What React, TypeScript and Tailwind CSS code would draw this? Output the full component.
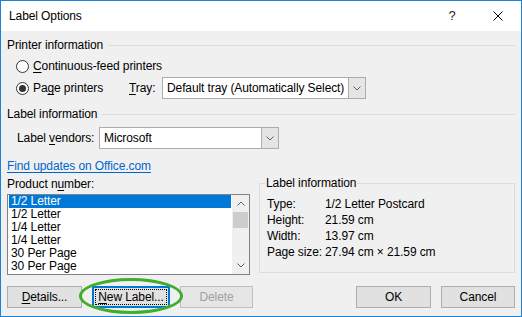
import React from "react";

function Mn({ children }: { children: React.ReactNode }) {
  return <span className="underline underline-offset-[2px] decoration-[1px]">{children}</span>;
}

function Chevron({ up = false }: { up?: boolean }) {
  return (
    <svg width="8" height="5" viewBox="0 0 8 5" className="block">
      <path
        d={up ? "M0.5 4.5 L4 1 L7.5 4.5" : "M0.5 0.5 L4 4 L7.5 0.5"}
        fill="none"
        stroke="#606060"
        strokeWidth="1"
      />
    </svg>
  );
}

function Section({ title }: { title: string }) {
  return (
    <div className="flex items-center h-[16px]">
      <span>{title}</span>
      <div className="flex-1 h-px bg-[#dcdcdc] ml-[5px]" />
    </div>
  );
}

function Radio({ checked = false }: { checked?: boolean }) {
  return (
    <span className="w-[13px] h-[13px] rounded-full border border-[#333333] bg-white flex items-center justify-center">
      {checked && <span className="w-[7px] h-[7px] rounded-full bg-[#333333]" />}
    </span>
  );
}

function Combo({ value, className }: { value: string; className: string }) {
  return (
    <div className={`flex h-[22px] bg-white border border-[#adadad] ${className}`}>
      <div className="flex-1 pl-[4px] flex items-center whitespace-nowrap overflow-hidden">{value}</div>
      <div className="w-[17px] bg-[#e5e5e5] border-l border-[#adadad] flex items-center justify-center">
        <Chevron />
      </div>
    </div>
  );
}

function Btn({ children, className = "", disabled = false }: { children: React.ReactNode; className?: string; disabled?: boolean }) {
  return (
    <div
      className={`h-[22px] flex items-center justify-center border ${
        disabled ? "border-[#bfbfbf] bg-[#e6e6e6] text-[#a0a0a0]" : "border-[#adadad] bg-[#e1e1e1]"
      } ${className}`}
    >
      {children}
    </div>
  );
}

const products = ["1/2 Letter", "1/2 Letter", "1/4 Letter", "1/4 Letter", "30 Per Page", "30 Per Page"];

const info = [
  ["Type:", "1/2 Letter Postcard"],
  ["Height:", "21.59 cm"],
  ["Width:", "13.97 cm"],
  ["Page size:", "27.94 cm \u00d7 21.59 cm"],
];

export default function App() {
  return (
    <div className="w-[522px] h-[317px] flex flex-col border border-[#1883d7] bg-[#f0f0f0] text-black text-[12px] leading-[16px] tracking-[-0.1px] font-['Segoe_UI','Liberation_Sans',Arial,sans-serif] overflow-hidden">
      {/* title bar */}
      <div className="h-[30px] bg-white flex items-center justify-between">
        <span className="pl-[8px]">Label Options</span>
        <div className="flex h-full">
          <div className="w-[46px] flex items-center justify-center text-[13px] text-[#222]">?</div>
          <div className="w-[46px] flex items-center justify-center">
            <svg width="10" height="10" viewBox="0 0 10 10">
              <path d="M0.5 0.5 L9.5 9.5 M9.5 0.5 L0.5 9.5" stroke="#000" strokeWidth="1" />
            </svg>
          </div>
        </div>
      </div>

      <div className="flex-1 flex flex-col px-[6px]">
        <div className="mt-[6px]">
          <Section title="Printer information" />
        </div>

        <div className="mt-[5px] h-[16px] flex items-center pl-[9px]">
          <Radio />
          <span className="ml-[4px]">
            <Mn>C</Mn>ontinuous-feed printers
          </span>
        </div>

        <div className="mt-[3px] h-[22px] flex items-center pl-[9px]">
          <Radio checked />
          <span className="ml-[4px] w-[96px]">
            Pa<Mn>g</Mn>e printers
          </span>
          <span className="w-[33px]">
            <Mn>T</Mn>ray:
          </span>
          <Combo value="Default tray (Automatically Select)" className="w-[204px]" />
        </div>

        <div className="mt-[7px]">
          <Section title="Label information" />
        </div>

        <div className="mt-[5px] h-[22px] flex items-center pl-[10px]">
          <span className="w-[82px]">
            Label <Mn>v</Mn>endors:
          </span>
          <Combo value="Microsoft" className="w-[180px]" />
        </div>

        <div className="mt-[9px] h-[16px]">
          <span className="text-[#0066cc] underline underline-offset-[2px]">Find updates on Office.com</span>
        </div>

        <div className="mt-[2px] flex gap-[9px]">
          <div className="flex flex-col w-[243px]">
            <div className="h-[16px]">
              Product n<Mn>u</Mn>mber:
            </div>
            <div className="mt-[2px] h-[81px] bg-white border border-[#828282] flex">
              <div className="flex-1 pl-[1px] pr-[1px] flex flex-col leading-[13px]">
                {products.map((p, i) => (
                  <div key={i} className={`h-[13px] pl-[2px] ${i === 0 ? "bg-[#0078d7] text-white" : ""}`}>
                    {p}
                  </div>
                ))}
              </div>
              <div className="w-[17px] bg-[#f0f0f0] flex flex-col">
                <div className="h-[17px] flex items-center justify-center">
                  <Chevron up />
                </div>
                <div className="flex-1 px-[1px]">
                  <div className="h-[16px] bg-[#cdcdcd]" />
                </div>
                <div className="h-[17px] flex items-center justify-center">
                  <Chevron />
                </div>
              </div>
            </div>
          </div>

          <fieldset className="w-[256px] h-[97px] border border-[#dcdcdc] pl-[5px]">
            <legend className="px-[1px] leading-[14px]">Label information</legend>
            <div className="mt-[6px] ml-[2px] flex flex-col">
              {info.map(([k, v]) => (
                <div key={k} className="h-[16px] flex whitespace-nowrap">
                  <span className="w-[58px]">{k}</span>
                  <span>{v}</span>
                </div>
              ))}
            </div>
          </fieldset>
        </div>

        <div className="mt-[11px] flex items-center">
          <Btn className="w-[75px]">
            <span>
              <Mn>D</Mn>etails...
            </span>
          </Btn>
          <div className="relative ml-[10px]">
            <div className="w-[78px] h-[22px] flex items-center justify-center border-2 border-[#0078d7] bg-[#e1e1e1]">
              <span className="px-[2px] leading-[14px] border border-dotted border-black">
                <Mn>N</Mn>ew Label...
              </span>
            </div>
            <div className="absolute left-[-13px] top-[-8px] w-[104px] h-[36px] rounded-[50%] border-[3px] border-[#3fae2a]" />
          </div>
          <Btn disabled className="w-[73px] ml-[10px]">
            Delete
          </Btn>
          <Btn className="w-[75px] ml-auto">OK</Btn>
          <Btn className="w-[74px] ml-[10px]">Cancel</Btn>
        </div>
      </div>
    </div>
  );
}
